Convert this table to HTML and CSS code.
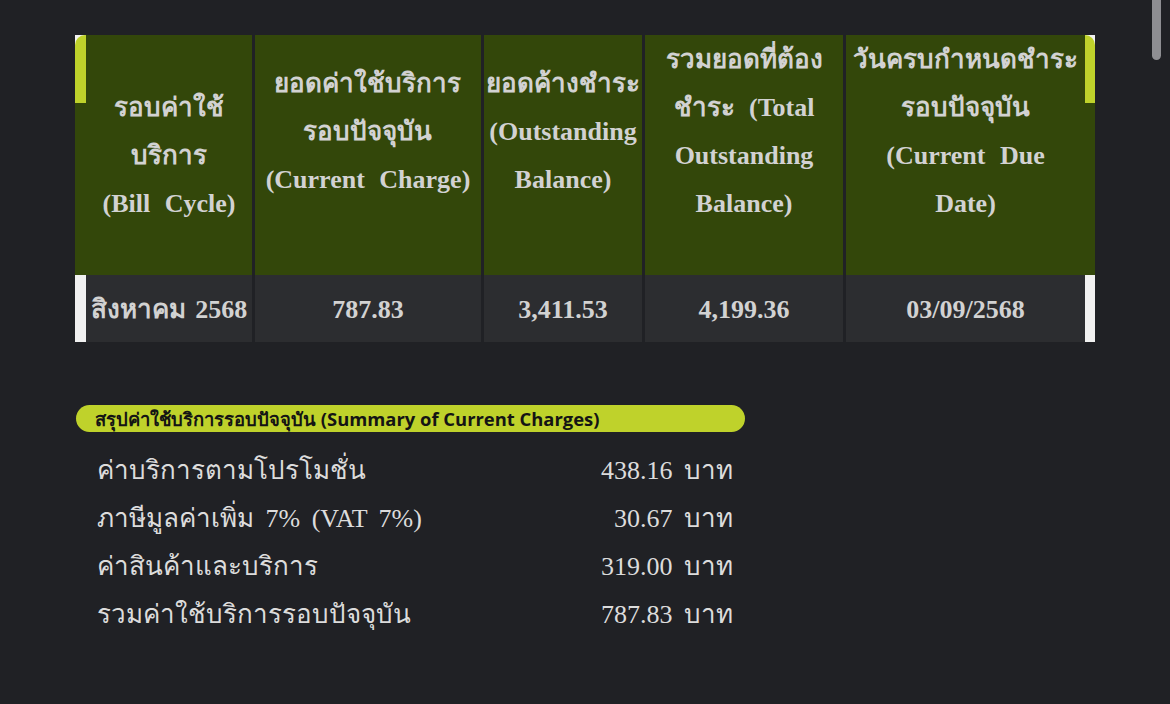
FILE: index.html
```html
<!DOCTYPE html>
<html lang="th">
<head>
<meta charset="utf-8">
<title>Bill summary</title>
<link rel="stylesheet" href="styles.css">
</head>
<body>
<main class="page">
  <section class="bill-table">
    <div class="cell head col-first">รอบค่าใช้<br>บริการ<br>(Bill Cycle)</div>
    <div class="cell head raised">ยอดค่าใช้บริการ<br>รอบปัจจุบัน<br>(Current Charge)</div>
    <div class="cell head raised">ยอดค้างชำระ<br>(Outstanding<br>Balance)</div>
    <div class="cell head raised">รวมยอดที่ต้อง<br>ชำระ (Total<br>Outstanding<br>Balance)</div>
    <div class="cell head raised col-last">วันครบกำหนดชำระ<br>รอบปัจจุบัน<br>(Current Due<br>Date)</div>

    <div class="cell data col-first">สิงหาคม 2568</div>
    <div class="cell data">787.83</div>
    <div class="cell data">3,411.53</div>
    <div class="cell data">4,199.36</div>
    <div class="cell data col-last">03/09/2568</div>

    <span class="strip strip-tl"><span class="strip-fill fill-left"></span></span>
    <span class="strip strip-tr"><span class="strip-fill fill-right"></span></span>
    <span class="strip strip-bl"></span>
    <span class="strip strip-br"></span>
  </section>

  <section class="summary">
    <h2 class="summary-title">สรุปค่าใช้บริการรอบปัจจุบัน (Summary of Current Charges)</h2>
    <div class="summary-rows">
      <div class="row"><span class="label">ค่าบริการตามโปรโมชั่น</span><span class="value">438.16 บาท</span></div>
      <div class="row"><span class="label">ภาษีมูลค่าเพิ่ม 7% (VAT 7%)</span><span class="value">30.67 บาท</span></div>
      <div class="row"><span class="label">ค่าสินค้าและบริการ</span><span class="value">319.00 บาท</span></div>
      <div class="row"><span class="label">รวมค่าใช้บริการรอบปัจจุบัน</span><span class="value">787.83 บาท</span></div>
    </div>
  </section>
</main>
<div class="scroll-thumb"></div>
</body>
</html>
```

FILE: styles.css
```css
html, body {
  margin: 0;
  padding: 0;
  background: #202125;
}

body {
  font-family: "Liberation Serif", "Noto Sans CJK SC", serif;
  color: #d4d4d4;
  height: 704px;
  overflow: hidden;
}

.page {
  padding: 35px 0 0 75px;
}

.bill-table {
  position: relative;
  width: 1020px;
  display: grid;
  grid-template-columns: 177px 226px 158px 198px 249px;
  column-gap: 3px;
  row-gap: 0;
}

.cell {
  display: flex;
  flex-direction: column;
  justify-content: center;
  align-items: center;
  text-align: center;
  font-weight: bold;
  font-size: 26px;
  white-space: nowrap;
  word-spacing: 8px;
  color: #d2d2d2;
  box-sizing: border-box;
}

.col-first {
  padding-left: 11px;
}

.col-last {
  padding-right: 10px;
}

.head {
  background: #33470a;
  height: 240px;
  line-height: 48px;
  padding-top: 2px;
}

.head.raised {
  padding-bottom: 48px;
}

.data {
  background: #2c2d30;
  height: 67px;
  line-height: 30px;
  word-spacing: 3px;
  padding-top: 2px;
}

.strip {
  position: absolute;
  display: block;
  background: #f1f1f1;
}

.strip-fill {
  display: block;
  width: 100%;
  height: 100%;
  background: #bfd22b;
}

.fill-left {
  border-top-left-radius: 10px;
}

.fill-right {
  border-top-right-radius: 10px;
}

.strip-tl {
  left: 0;
  top: 0;
  width: 11px;
  height: 68px;
}

.strip-tr {
  right: 0;
  top: 0;
  width: 10px;
  height: 68px;
}

.strip-bl {
  left: 0;
  top: 240px;
  width: 11px;
  height: 67px;
}

.strip-br {
  right: 0;
  top: 240px;
  width: 10px;
  height: 67px;
}

.summary {
  margin-top: 63px;
  width: 670px;
}

.summary-title {
  margin: 0 0 0 1px;
  height: 27px;
  box-sizing: border-box;
  padding-left: 19px;
  background: #bfd22b;
  border-radius: 14px;
  font-family: "Open Sans", "Noto Sans", sans-serif;
  font-weight: bold;
  font-size: 18.4px;
  line-height: 27px;
  color: #141414;
  white-space: nowrap;
}

.summary-rows {
  margin: 15px 0 0 22px;
  width: 636px;
}

.row {
  display: flex;
  justify-content: space-between;
  font-size: 26px;
  line-height: 48px;
  word-spacing: 5px;
  color: #dcdcdc;
  white-space: nowrap;
}

.scroll-thumb {
  position: fixed;
  top: 0;
  left: 1152px;
  width: 9px;
  height: 60px;
  border-radius: 0 0 5px 5px;
  background: #8e8e92;
}
```
